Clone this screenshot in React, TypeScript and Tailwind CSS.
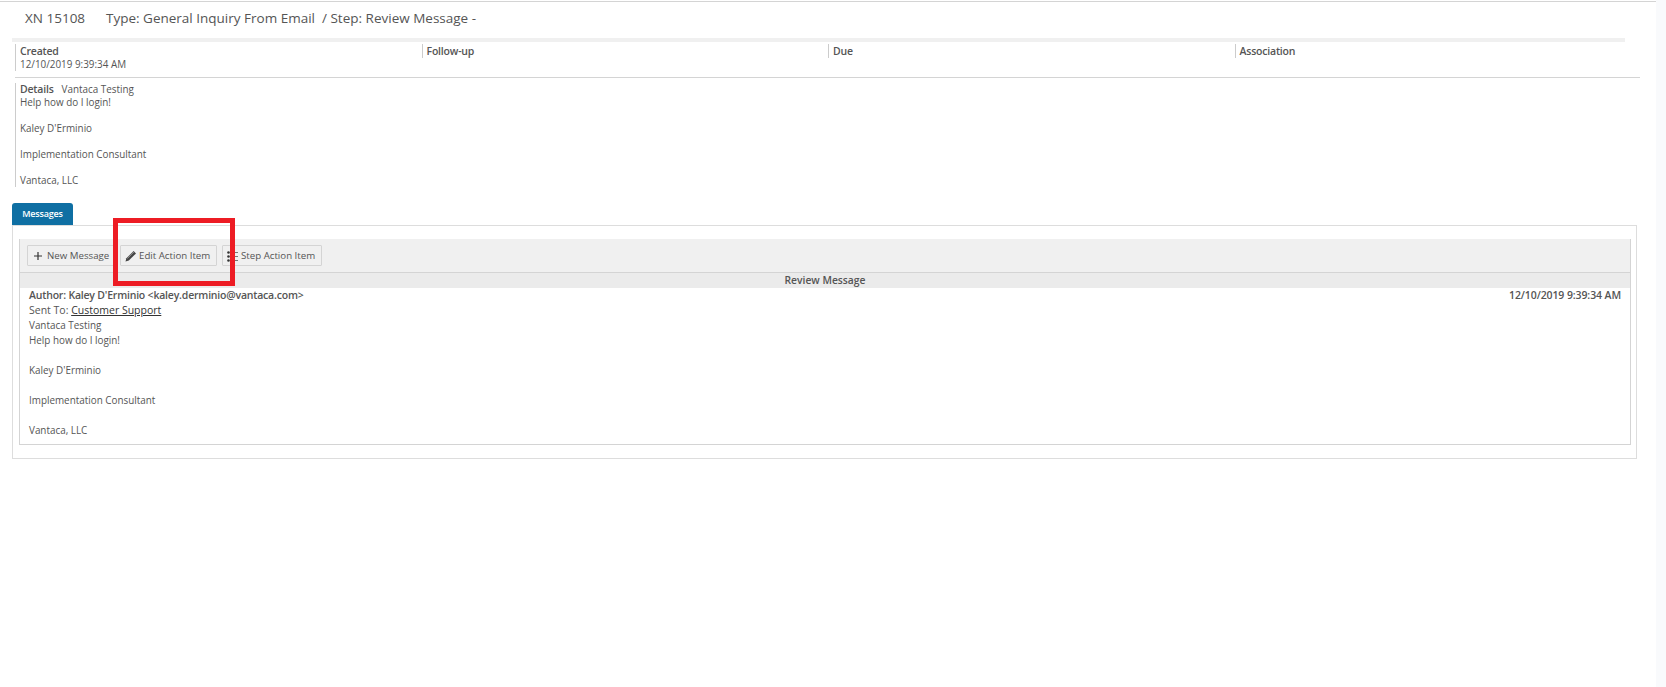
import type { ReactNode } from 'react'

const FONT = "font-['Open_Sans',sans-serif]"

function Meta({ label, value }: { label: string; value?: string }) {
  return (
    <div className="w-[406.5px] shrink-0">
      <div className="border-l border-[#cccccc] pl-1 text-[10.5px] font-semibold leading-[14px] tracking-[-0.2px] text-[#555555]">{label}</div>
      {value && <div className="border-l border-[#cccccc] pl-1 text-[9.9px] leading-[13px] text-[#555555]">{value}</div>}
    </div>
  )
}

function ToolButton({ icon, label, className }: { icon: ReactNode; label: string; className: string }) {
  return (
    <button className={`flex h-[21px] items-center whitespace-nowrap rounded-[1px] border border-[#d4d4d4] bg-[#f0f0f0] pt-px text-[9.7px] text-[#555555] ${className}`}>
      {icon}
      {label}
    </button>
  )
}

function MessageBody() {
  return (
    <div className="text-[9.9px] leading-[15px] text-[#555555]">
      <p>Vantaca Testing</p>
      <p>Help how do I login!</p>
      <p className="h-[15px]" />
      <p>Kaley D'Erminio</p>
      <p className="h-[15px]" />
      <p>Implementation Consultant</p>
      <p className="h-[15px]" />
      <p>Vantaca, LLC</p>
    </div>
  )
}

export default function App() {
  return (
    <div className={`relative flex h-[687px] w-[1666px] overflow-hidden bg-white ${FONT}`}>
      <div className="w-[1656px] shrink-0">
        <div className="mt-px h-px bg-[#d4d4d4]" />
        <div className="flex h-[36px] items-center pb-[3px] pl-[25px] text-[13.5px] text-[#555555]">
          <span className="w-[81px]">XN 15108</span>
          <span>Type: General Inquiry From Email&nbsp; / Step: Review Message -</span>
        </div>

        <div className="ml-3 h-1 w-[1613px] bg-[#f0f0f0]" />
        <div className="ml-[15px] mt-0.5 flex">
          <Meta label="Created" value="12/10/2019 9:39:34 AM" />
          <Meta label="Follow-up" />
          <Meta label="Due" />
          <Meta label="Association" />
        </div>

        <div className="ml-[15px] mt-[6px] h-px w-[1625px] bg-[#d4d4d4]" />

        <div className="ml-[15px] mt-[5px] h-[104px] border-l border-[#cccccc] pl-1 text-[9.9px] leading-[13px] text-[#555555]">
          <p>
            <span className="text-[10.5px] font-semibold tracking-[-0.2px]">Details</span>
            <span className="ml-2">Vantaca Testing</span>
          </p>
          <p>Help how do I login!</p>
          <p className="h-[13px]" />
          <p>Kaley D'Erminio</p>
          <p className="h-[13px]" />
          <p>Implementation Consultant</p>
          <p className="h-[13px]" />
          <p>Vantaca, LLC</p>
        </div>

        <div className="ml-3 mt-4 flex h-[22px] w-[61px] items-center justify-center rounded-t-[3px] bg-[#0f6fa3] text-[9px] font-semibold tracking-[-0.2px] text-white">
          Messages
        </div>
        <div className="ml-3 h-[234px] w-[1625px] border border-[#dddddd] px-[6px] pt-[13px]">
          <div className="h-[206px] w-[1612px] border-x border-b border-[#d4d4d4]">
            <div className="flex h-[34px] items-center gap-[5px] border-b border-[#d4d4d4] bg-[#f0f0f0] pl-[7px]">
              <ToolButton
                className="w-[88px] pl-[5px]"
                icon={
                  <svg width="10" height="10" viewBox="0 0 10 10" className="mr-[4px]">
                    <path d="M5 1v8M1 5h8" stroke="#333333" strokeWidth="1.2" />
                  </svg>
                }
                label="New Message"
              />
              <ToolButton
                className="w-[97px] pl-[4px]"
                icon={
                  <svg width="12" height="12" viewBox="0 0 12 12" className="mr-[2px]">
                    <path d="M0.5 11.5 L1.4 8.2 L8.6 1 L11 3.4 L3.8 10.6 Z" fill="#444444" />
                    <path d="M2.4 8.4 L8.8 2" stroke="#bbbbbb" strokeWidth="0.7" />
                  </svg>
                }
                label="Edit Action Item"
              />
              <ToolButton
                className="w-[100px] pl-[3px]"
                icon={
                  <svg width="13" height="13" viewBox="0 0 13 13" className="mr-[2px]">
                    <circle cx="2.5" cy="2.5" r="1.3" fill="#333333" />
                    <circle cx="2.5" cy="6.5" r="1.3" fill="#333333" />
                    <circle cx="2.5" cy="10.5" r="1.3" fill="#333333" />
                    <path d="M8 2.5h4M8 6.5h4M8 10.5h4" stroke="#777777" strokeWidth="1" />
                  </svg>
                }
                label="Step Action Item"
              />
            </div>
            <div className="flex h-[15px] items-center justify-center bg-[#ebebeb] text-[10.3px] font-semibold text-[#555555]">
              Review Message
            </div>
            <div className="px-[9px]">
              <div className="flex h-[15px] items-center justify-between text-[10.5px] font-semibold text-[#555555]">
                <span className="tracking-[-0.2px]">Author: Kaley D'Erminio &lt;kaley.derminio@vantaca.com&gt;</span>
                <span className="tracking-[-0.1px]">12/10/2019 9:39:34 AM</span>
              </div>
              <div className="flex h-[15px] items-center text-[10.5px] text-[#555555]">
                Sent To:&nbsp;<span className="text-[#333333] underline">Customer Support</span>
              </div>
              <MessageBody />
            </div>
          </div>
        </div>
      </div>
      <div className="flex-1 bg-[#f9fafc]" />

      {/* annotation drawn over the screenshot */}
      <div className="absolute left-[113px] top-[218px] h-[68px] w-[122px] border-[5px] border-[#ed1c24]" />
    </div>
  )
}
